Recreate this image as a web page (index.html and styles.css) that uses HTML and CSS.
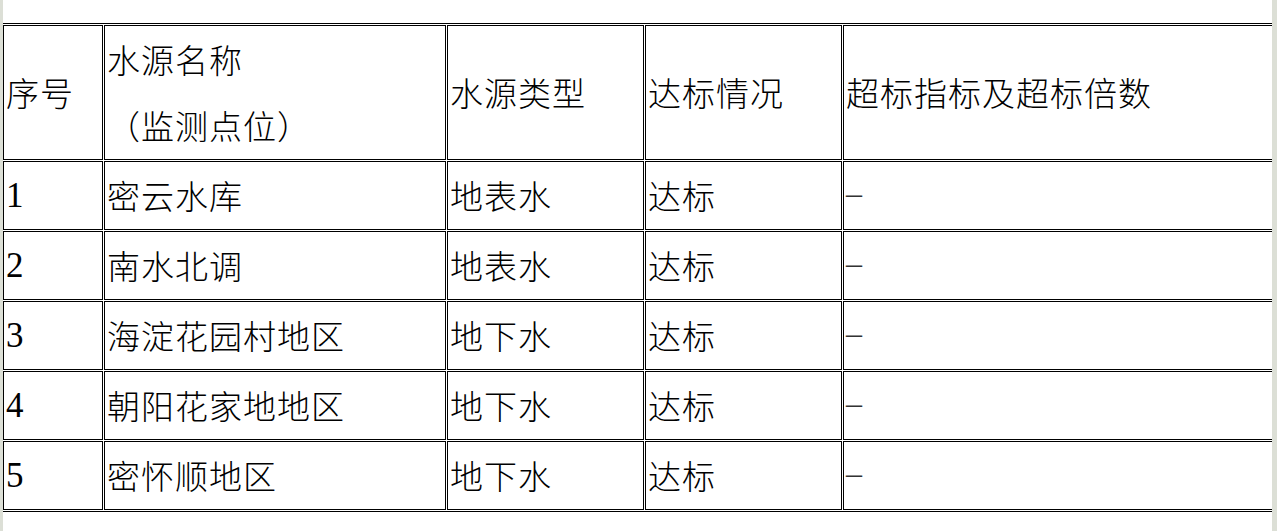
FILE: index.html
```html
<!DOCTYPE html>
<html lang="zh-CN">
<head>
<meta charset="utf-8">
<title>水源达标情况</title>
<link rel="stylesheet" href="styles.css">
</head>
<body>
<div class="edge edge-left"></div>
<div class="edge edge-right"></div>
<table class="report">
  <tr class="head">
    <td class="c1">序号</td>
    <td class="c2">水源名称<br>（监测点位）</td>
    <td class="c3">水源类型</td>
    <td class="c4">达标情况</td>
    <td class="c5">超标指标及超标倍数</td>
  </tr>
  <tr>
    <td class="num">1</td>
    <td>密云水库</td>
    <td>地表水</td>
    <td>达标</td>
    <td class="dash">–</td>
  </tr>
  <tr>
    <td class="num">2</td>
    <td>南水北调</td>
    <td>地表水</td>
    <td>达标</td>
    <td class="dash">–</td>
  </tr>
  <tr>
    <td class="num">3</td>
    <td>海淀花园村地区</td>
    <td>地下水</td>
    <td>达标</td>
    <td class="dash">–</td>
  </tr>
  <tr>
    <td class="num">4</td>
    <td>朝阳花家地地区</td>
    <td>地下水</td>
    <td>达标</td>
    <td class="dash">–</td>
  </tr>
  <tr>
    <td class="num">5</td>
    <td>密怀顺地区</td>
    <td>地下水</td>
    <td>达标</td>
    <td class="dash">–</td>
  </tr>
</table>
</body>
</html>
```

FILE: styles.css
```css
html, body {
  margin: 0;
  padding: 0;
  background: #ffffff;
  overflow: hidden;
}

body {
  color: #000;
  font-family: "Liberation Serif", "Noto Sans CJK SC", serif;
}

.edge {
  position: fixed;
  top: 0;
  bottom: 0;
  background: #dcdfd6;
}

.edge-left {
  left: 0;
  width: 3px;
}

.edge-right {
  right: 0;
  width: 5px;
}

.report {
  margin: 23px 0 0 1px;
  width: 1275px;
  table-layout: fixed;
  border: 1px solid #000;
  border-collapse: separate;
  border-spacing: 1px;
}

.report td {
  box-sizing: border-box;
  border: 1px solid #000;
  padding: 0 1px 1px 2px;
  font-size: 33px;
  font-weight: 300;
  letter-spacing: 1px;
  line-height: 66px;
  vertical-align: middle;
  text-align: left;
  white-space: nowrap;
  font-family: "Noto Sans CJK SC", sans-serif;
}

.report td.num,
.report td.dash {
  font-family: "Liberation Serif", serif;
  font-weight: 400;
  letter-spacing: 0;
  font-size: 35px;
}

.report td.num {
  line-height: 64px;
  padding-top: 2px;
}

.report td.dash {
  font-size: 32px;
  color: #333;
  line-height: 60px;
  padding-bottom: 6px;
}

.c1 { width: 100px; }
.c2 { width: 342px; }
.c3 { width: 197px; }
.c4 { width: 197px; }
.c5 { width: 431px; }
```
